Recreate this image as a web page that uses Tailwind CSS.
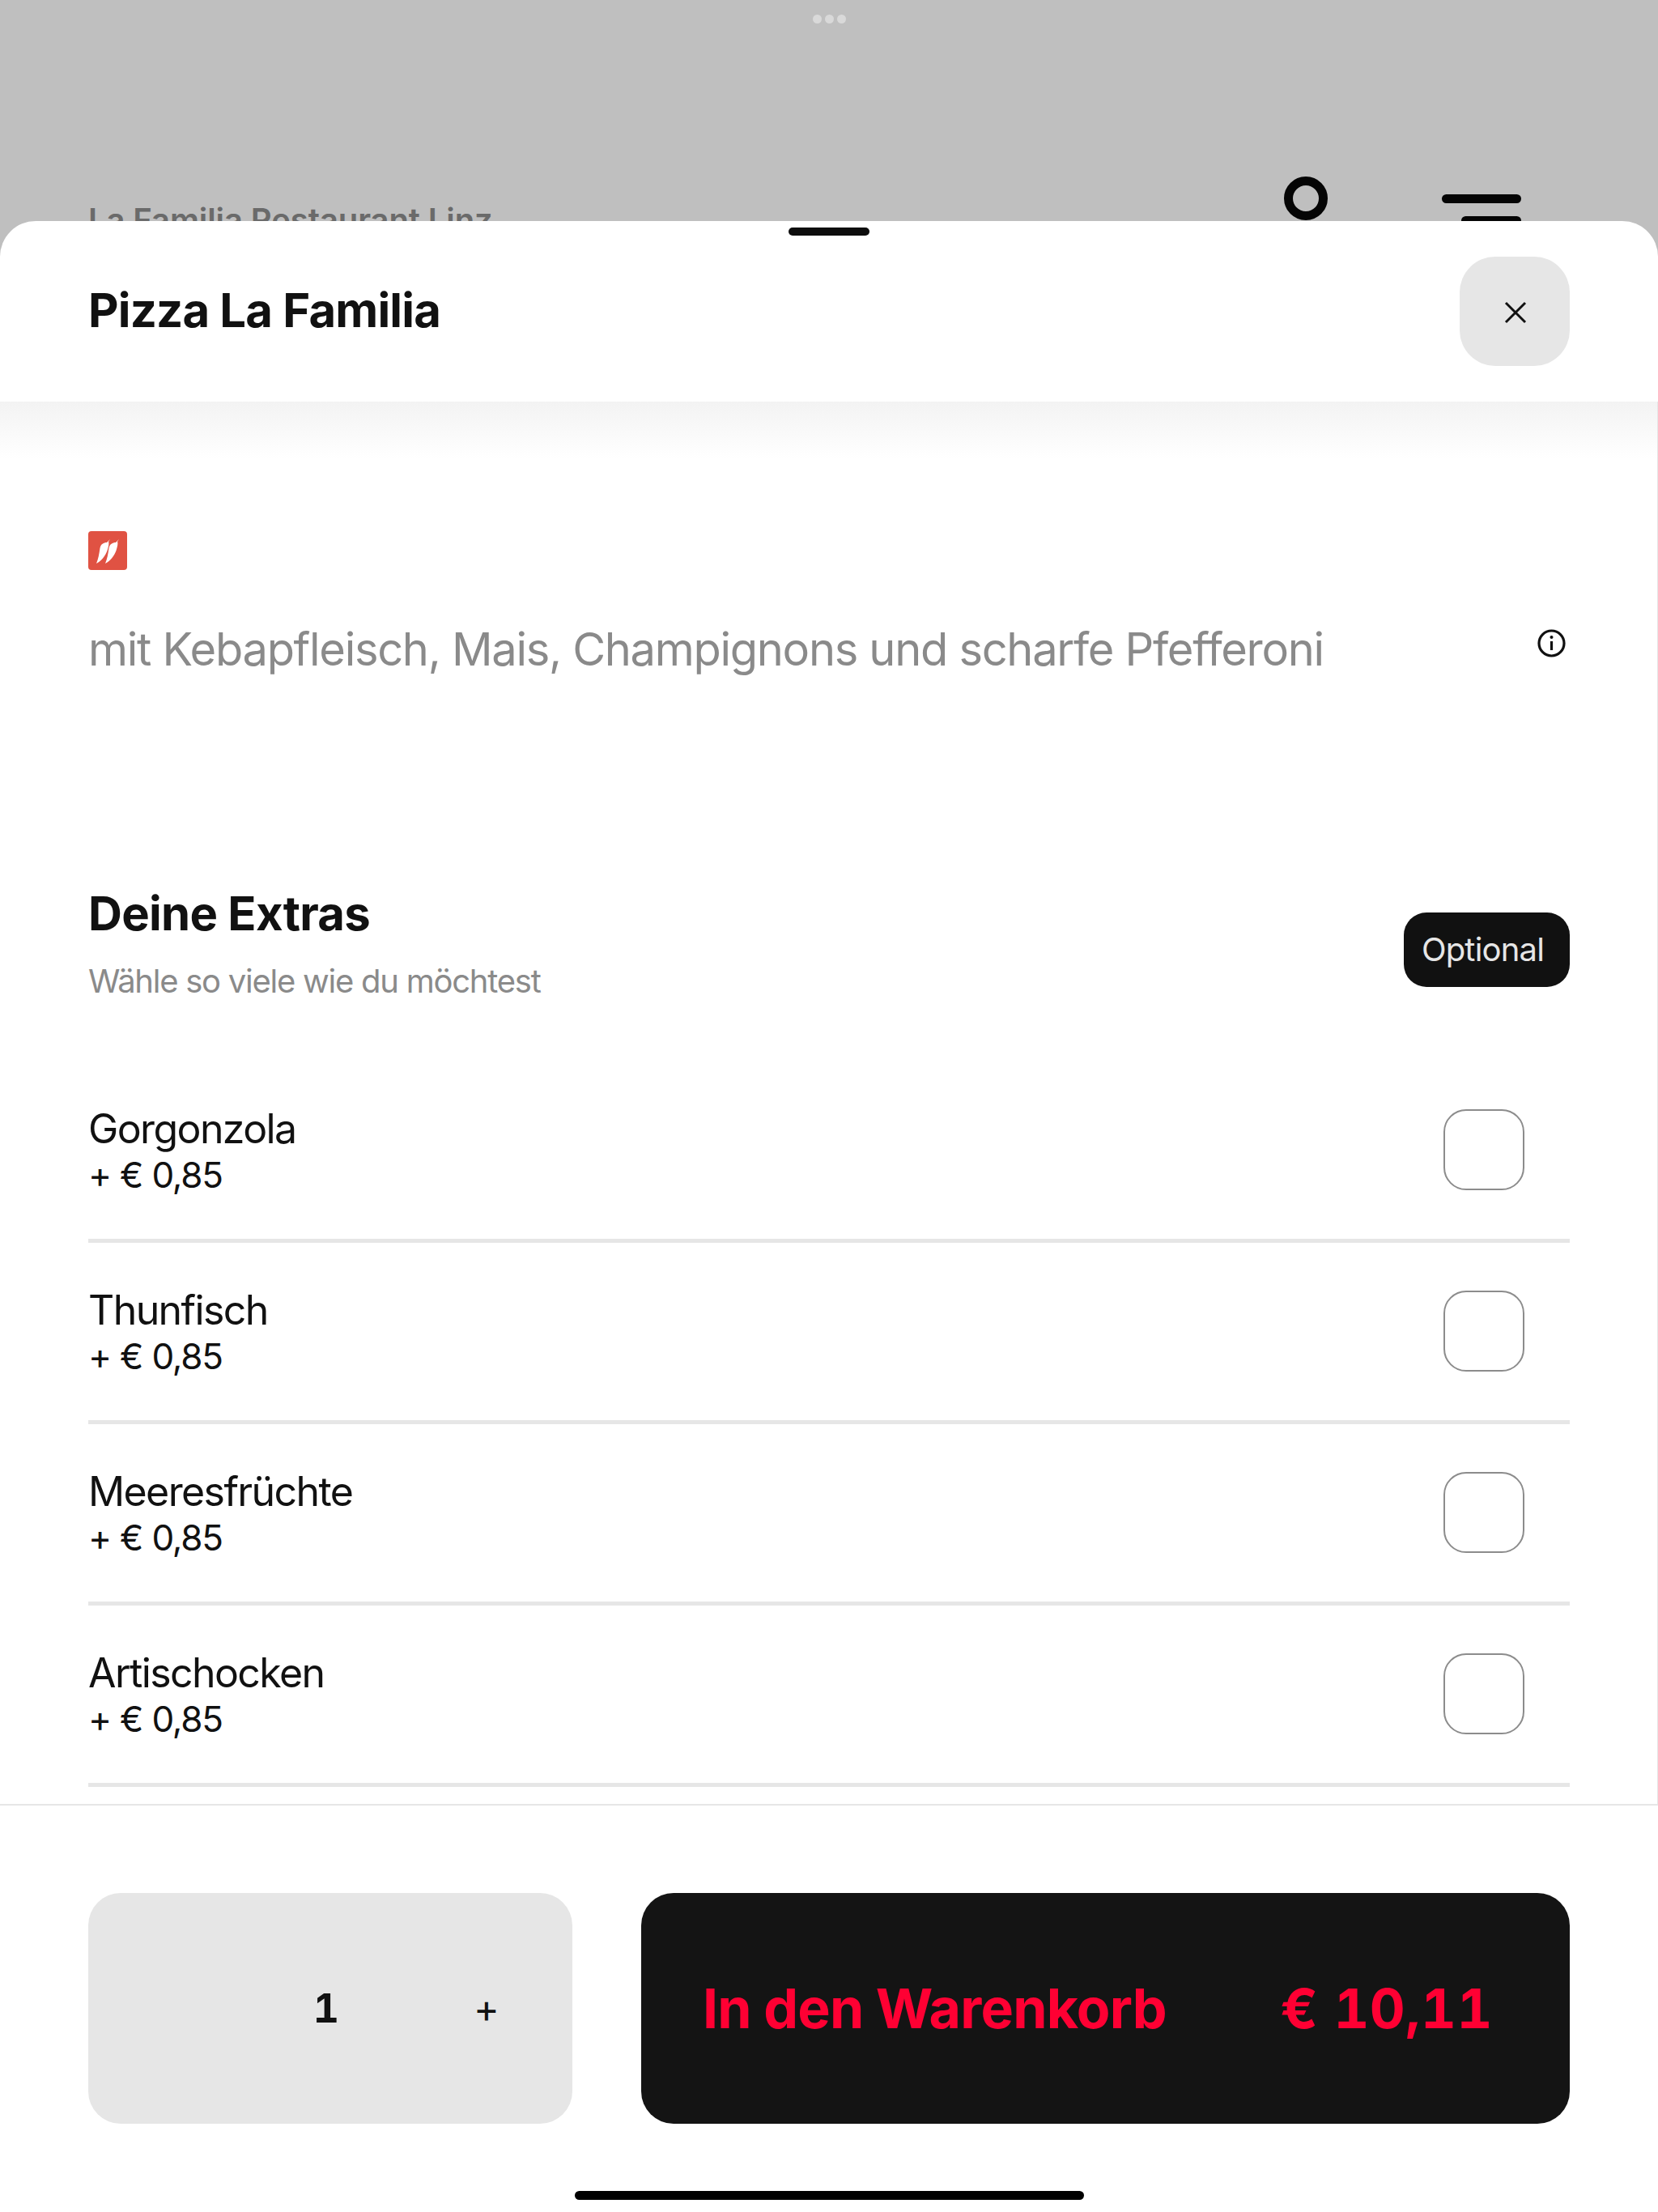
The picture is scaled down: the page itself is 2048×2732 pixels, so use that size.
<!DOCTYPE html>
<html lang="de">

<head>
  <meta charset="UTF-8">
  <meta name="viewport" content="width=device-width, initial-scale=1.0">
  <title>Pizza La Familia</title>
  <script src="https://cdn.jsdelivr.net/npm/@tailwindcss/browser@4"></script>
</head>

<body class="bg-white font-['Inter',sans-serif] text-[#111111]">
  <div class="w-[2048px] h-[2732px] flex flex-col overflow-hidden bg-[#bfbfbf]">

    <!-- page behind the sheet -->
    <div class="h-[273px] shrink-0 overflow-hidden relative">
      <div class="flex justify-center gap-[4px] pt-[18px]">
        <span class="w-[11px] h-[11px] rounded-full bg-[#d9d9d9]"></span>
        <span class="w-[11px] h-[11px] rounded-full bg-[#d9d9d9]"></span>
        <span class="w-[11px] h-[11px] rounded-full bg-[#d9d9d9]"></span>
      </div>
      <div class="flex justify-between items-start pl-[109px] pr-[169px] pt-[189px]">
        <span class="text-[40px] leading-[48px] font-semibold text-[#6a6a6a] mt-[30px] tracking-[-0.1px]">La Familia Restaurant Linz</span>
        <div class="flex items-start gap-[141px]">
          <span class="w-[54px] h-[54px] rounded-full border-[11px] border-[#050505]"></span>
          <div class="flex flex-col items-end gap-[16px] pt-[22px]">
            <span class="w-[98px] h-[11px] rounded-full bg-[#050505]"></span>
            <span class="w-[74px] h-[11px] rounded-full bg-[#050505]"></span>
          </div>
        </div>
      </div>
    </div>

    <!-- sheet -->
    <div class="flex-1 flex flex-col bg-white rounded-t-[44px] overflow-hidden">
      <div class="h-[223px] shrink-0 flex flex-col">
        <div class="w-[100px] h-[10px] mt-[8px] mx-auto rounded-full bg-[#0d0d0d]"></div>
        <div class="flex items-center justify-between pl-[109px] pr-[109px] mt-[26px]">
          <h1 class="text-[58px] leading-[68px] font-bold tracking-[-0.8px] mb-[3px]">Pizza La Familia</h1>
          <button class="w-[136px] h-[135px] rounded-[44px] bg-[#e6e6e6] flex items-center justify-center">
            <svg class="mt-[2px] ml-[1px]" width="30" height="30" viewBox="0 0 30 30" fill="none" stroke="#111111" stroke-width="3"><path d="M3 3 L27 27 M27 3 L3 27" /></svg>
          </button>
        </div>
      </div>

      <div class="flex-1 min-h-0 flex flex-col border-r border-[#e6e6e6] overflow-hidden">
        <div class="h-[70px] shrink-0 bg-gradient-to-b from-[#f3f3f3] to-white"></div>

        <div class="pl-[109px] pr-[108px] pt-[90px]">
          <svg class="block" width="48" height="48" viewBox="0 0 48 48">
            <rect width="48" height="48" rx="4" fill="#e05243" />
            <path d="M27 10 L25 13 C26 15 25 19 23.5 24 C21 31 16 37 10 40 C12.5 34 13.5 28 14.5 21 C15.5 16 19 14 23 14 Z" fill="#ffffff" />
            <path d="M38 10 L36 13 C37 15 36 19 34.5 24 C32 31 27 37 21 40 C23.5 34 24.5 28 25.5 21 C26.5 16 30 14 34 14 Z" fill="#ffffff" />
          </svg>
          <div class="flex justify-between items-start mt-[64px]">
            <p class="text-[56px] leading-[68px] text-[#8a8a8a] tracking-[-1.3px]">mit Kebapfleisch, Mais, Champignons und scharfe Pfefferoni</p>
            <svg class="mt-[9px] mr-[5px]" width="35" height="35" viewBox="0 0 35 35" fill="none" stroke="#111111">
              <circle cx="17.5" cy="17.5" r="15.5" stroke-width="3.2" />
              <path d="M17.5 15 V26" stroke-width="3.2" />
              <circle cx="17.5" cy="10" r="2" fill="#111111" stroke="none" />
            </svg>
          </div>
        </div>

        <div class="pl-[109px] pr-[108px] mt-[259px]">
          <div class="flex justify-between items-center">
            <div>
              <h2 class="text-[58px] leading-[68px] font-bold tracking-[-0.7px] -mt-[1px]">Deine Extras</h2>
              <p class="text-[40px] leading-[48px] text-[#8a8a8a] mt-[26px] tracking-[-1.25px]">Wähle so viele wie du möchtest</p>
            </div>
            <span class="w-[205px] h-[92px] flex items-center justify-center rounded-[28px] bg-[#111111] text-[#e6e6e6] text-[40px] mt-[15px] tracking-[-0.8px] pr-[10px]">Optional</span>
          </div>

          <div class="mt-[75px]">
            <div class="h-[224px] flex items-center justify-between border-b-[5px] border-[#e6e6e6] pr-[56px]">
              <div>
                <p class="text-[50px] leading-[60px] tracking-[-1.6px]">Gorgonzola</p>
                <p class="text-[44px] leading-[54px] tracking-[-1.2px]">+ € 0,85</p>
              </div>
              <span class="w-[100px] h-[100px] rounded-[28px] border-2 border-[#8c8c8c] -mt-[2px]"></span>
            </div>
            <div class="h-[224px] flex items-center justify-between border-b-[5px] border-[#e6e6e6] pr-[56px]">
              <div>
                <p class="text-[50px] leading-[60px] tracking-[-1.6px]">Thunfisch</p>
                <p class="text-[44px] leading-[54px] tracking-[-1.2px]">+ € 0,85</p>
              </div>
              <span class="w-[100px] h-[100px] rounded-[28px] border-2 border-[#8c8c8c] -mt-[2px]"></span>
            </div>
            <div class="h-[224px] flex items-center justify-between border-b-[5px] border-[#e6e6e6] pr-[56px]">
              <div>
                <p class="text-[50px] leading-[60px] tracking-[-1.6px]">Meeresfrüchte</p>
                <p class="text-[44px] leading-[54px] tracking-[-1.2px]">+ € 0,85</p>
              </div>
              <span class="w-[100px] h-[100px] rounded-[28px] border-2 border-[#8c8c8c] -mt-[2px]"></span>
            </div>
            <div class="h-[224px] flex items-center justify-between border-b-[5px] border-[#e6e6e6] pr-[56px]">
              <div>
                <p class="text-[50px] leading-[60px] tracking-[-1.6px]">Artischocken</p>
                <p class="text-[44px] leading-[54px] tracking-[-1.2px]">+ € 0,85</p>
              </div>
              <span class="w-[100px] h-[100px] rounded-[28px] border-2 border-[#8c8c8c] -mt-[2px]"></span>
            </div>
          </div>
        </div>
      </div>

      <!-- footer -->
      <div class="h-[504px] shrink-0 border-t-2 border-[#e6e6e6] bg-white flex flex-col items-center">
        <div class="w-full flex gap-[85px] pl-[109px] pr-[109px] pt-[108px]">
          <div class="w-[598px] h-[285px] rounded-[40px] bg-[#e6e6e6] flex items-center">
            <span class="w-[232px]"></span>
            <span class="w-[124px] text-center text-[50px] font-bold tabular-nums">1</span>
            <span class="w-[124px] ml-[74px] text-center text-[48px]">+</span>
          </div>
          <button class="flex-1 h-[285px] rounded-[40px] bg-[#141414] text-[#ff0033] flex items-center justify-between pl-[76px] pr-[95px] text-[68px] font-bold">
            <span class="tracking-[-0.8px] -mt-[2px]">In den Warenkorb</span>
            <span class="tabular-nums tracking-[0.5px] -mt-[2px]">€ 10,11</span>
          </button>
        </div>
        <div class="w-[629px] h-[11px] mt-[83px] rounded-full bg-black"></div>
      </div>
    </div>
  </div>
</body>

</html>
